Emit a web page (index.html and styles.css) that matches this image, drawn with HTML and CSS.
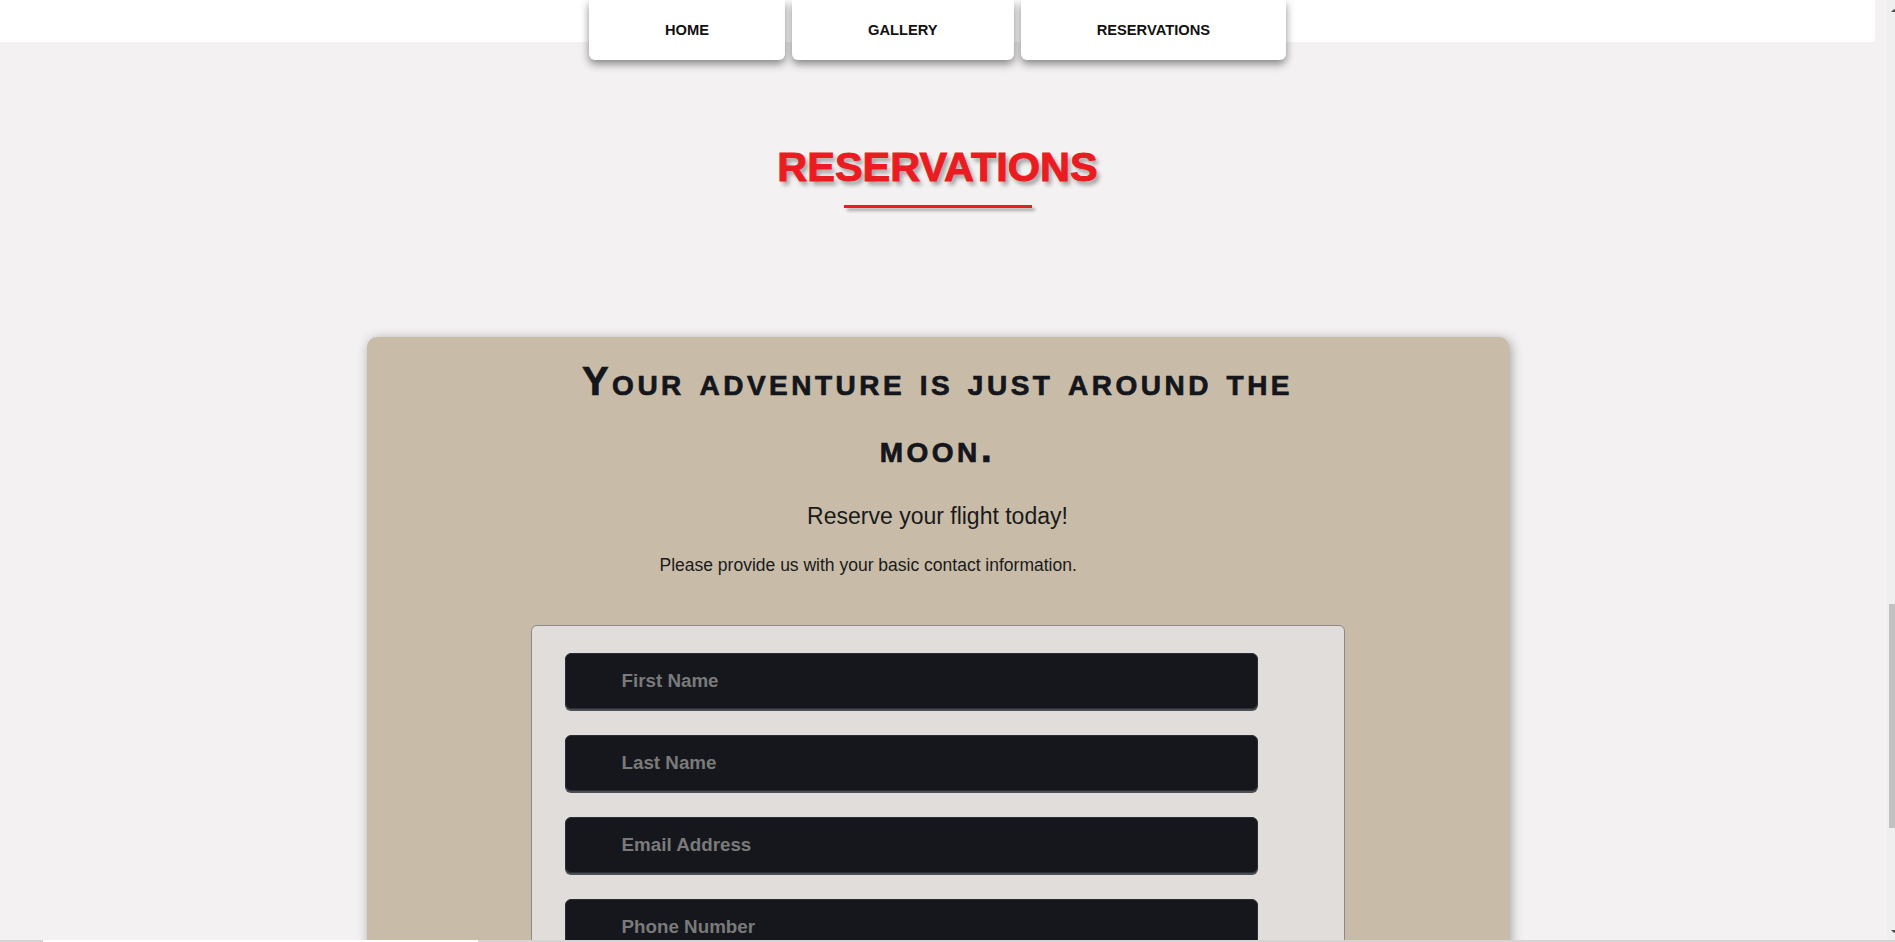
FILE: index.html
```html
<!DOCTYPE html>
<html lang="en">
<head>
<meta charset="utf-8">
<title>Reservations</title>
<link rel="stylesheet" href="styles.css">
</head>
<body>
<div class="page">
  <div class="main">
    <header class="topbar">
      <nav class="nav">
        <a class="nav-btn" href="#">HOME</a>
        <a class="nav-btn" href="#">GALLERY</a>
        <a class="nav-btn" href="#">RESERVATIONS</a>
      </nav>
    </header>
    <section class="title">
      <h1 class="title-text">RESERVATIONS</h1>
      <div class="title-rule"></div>
    </section>
    <section class="card">
      <h2 class="card-heading">Your adventure is just around the moon.</h2>
      <p class="lead">Reserve your flight today!</p>
      <p class="note">Please provide us with your basic contact information.</p>
      <form class="form">
        <input class="field" type="text" placeholder="First Name">
        <input class="field" type="text" placeholder="Last Name">
        <input class="field" type="email" placeholder="Email Address">
        <input class="field" type="tel" placeholder="Phone Number">
        <input class="field" type="text" placeholder="Departure Date">
      </form>
    </section>
  </div>
  <div class="scrollbar">
    <span class="arrow arrow-up"></span>
    <div class="thumb"></div>
    <span class="arrow arrow-down"></span>
  </div>
  <div class="hbar"><div class="hbar-seg"></div></div>
</div>
</body>
</html>
```

FILE: styles.css
```css
html, body {
  margin: 0;
  padding: 0;
  height: 942px;
  overflow: hidden;
  background: #f3f1f2;
  font-family: "Liberation Sans", Arial, sans-serif;
}

.page {
  display: flex;
  height: 942px;
  position: relative;
}

.main {
  flex: 1;
  padding-right: 12px;
  min-width: 0;
}

.topbar {
  height: 42px;
  background: #ffffff;
  display: flex;
  justify-content: center;
  align-items: flex-start;
}

.nav {
  display: flex;
  gap: 7px;
  height: 60px;
  position: relative;
  z-index: 2;
}

.nav-btn {
  display: flex;
  align-items: center;
  justify-content: center;
  height: 60px;
  padding: 0 76px;
  background: #ffffff;
  color: #111111;
  text-decoration: none;
  font-weight: bold;
  font-size: 14.7px;
  border-radius: 0 0 6px 6px;
  box-shadow: 0 4px 8px rgba(0, 0, 0, 0.45);
  box-sizing: border-box;
}

.title {
  display: flex;
  flex-direction: column;
  align-items: center;
  padding-top: 103px;
}

.title-text {
  margin: 0;
  font-size: 41.5px;
  line-height: 44px;
  font-weight: bold;
  color: #ea1c21;
  -webkit-text-stroke: 1px #ea1c21;
  text-shadow: 3px 4px 4px rgba(0, 0, 0, 0.35);
}

.title-rule {
  width: 188px;
  height: 3px;
  margin-top: 16px;
  background: #ea1c21;
  box-shadow: 3px 3px 3px rgba(0, 0, 0, 0.3);
}

.card {
  margin: 129px auto 0;
  width: 1142px;
  min-height: 700px;
  flex-shrink: 0;
  background: #c8bca8;
  border-radius: 10px;
  box-shadow: 2px 2px 12px rgba(0, 0, 0, 0.35);
  display: flex;
  flex-direction: column;
  align-items: center;
}

.card-heading {
  margin: 11px 0 0;
  max-width: 800px;
  text-align: center;
  font-size: 40px;
  line-height: 67px;
  font-weight: bold;
  font-variant: small-caps;
  letter-spacing: 3.5px;
  color: #14161b;
  -webkit-text-stroke: 0.7px #14161b;
}

.lead {
  margin: 20px 0 0;
  font-size: 23px;
  line-height: 28px;
  color: #1a1a1a;
}

.note {
  align-self: flex-start;
  margin: 24px 0 0 293px;
  font-size: 17.5px;
  line-height: 22px;
  color: #1a1a1a;
}

.form {
  margin-top: 49px;
  width: 814px;
  flex-shrink: 0;
  box-sizing: border-box;
  background: #e1dddb;
  border: 1px solid #8a8a8a;
  border-radius: 6px;
  padding: 27px 0 30px 33px;
  display: flex;
  flex-direction: column;
  gap: 26px;
}

.field {
  flex-shrink: 0;
  width: 693px;
  height: 56px;
  box-sizing: border-box;
  background: #15171c;
  border: 1px solid #2a2d33;
  border-radius: 6px;
  box-shadow: 0 2px 0 #4b4e55;
  padding: 0 0 0 56px;
  font-family: "Liberation Sans", Arial, sans-serif;
  font-size: 18.8px;
  font-weight: bold;
  color: #eeeeee;
  outline: none;
}

.field::placeholder {
  color: #7a7a7a;
  opacity: 1;
}

.scrollbar {
  width: 8px;
  flex: none;
  background: #efefef;
  position: relative;
}

.thumb {
  position: absolute;
  left: 2px;
  right: 0;
  top: 604px;
  height: 224px;
  background: #c1c1c1;
}

.arrow {
  position: absolute;
  left: 4px;
  width: 0;
  height: 0;
  border-left: 3px solid transparent;
  border-right: 3px solid transparent;
}

.arrow-up {
  top: 9px;
  border-bottom: 3px solid #505050;
}

.arrow-down {
  bottom: 9px;
  border-top: 3px solid #505050;
}

.hbar {
  position: absolute;
  left: 0;
  right: 0;
  bottom: 0;
  height: 2px;
  background: #d4d4d4;
}

.hbar-seg {
  position: absolute;
  left: 43px;
  width: 435px;
  top: 0;
  bottom: 0;
  background: #ffffff;
}
```
